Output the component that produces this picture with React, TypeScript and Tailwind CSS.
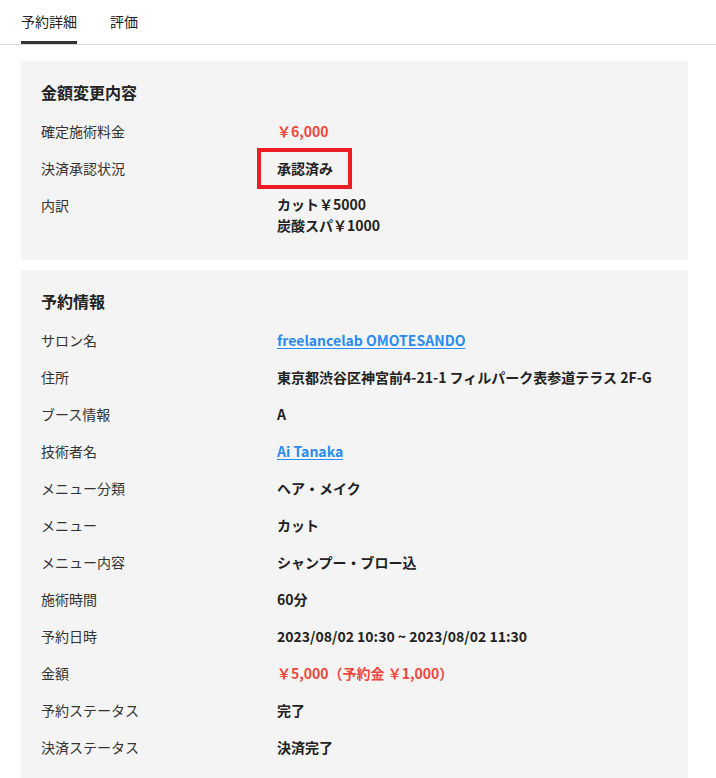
const font = { fontFamily: '"Noto Sans CJK JP", "Noto Sans", sans-serif' }

type Row = { label: string; value: React.ReactNode }

function InfoRow({ label, value }: Row) {
  return (
    <div className="flex items-start py-[7.5px] leading-[22px]">
      <div className="w-[236px] shrink-0 text-[14px] text-[#333]">{label}</div>
      <div className="text-[14px] font-bold text-[#222]">{value}</div>
    </div>
  )
}

function Panel({ title, rows }: { title: string; rows: Row[] }) {
  return (
    <section className="mx-[21px] w-[667px] bg-[#f4f4f4] px-5 pb-[17px] pt-[19px]">
      <h2 className="mb-[8px] text-[16px] font-bold leading-[24px] text-[#222]">{title}</h2>
      {rows.map((r) => (
        <InfoRow key={r.label} label={r.label} value={r.value} />
      ))}
    </section>
  )
}

function Link({ children }: { children: React.ReactNode }) {
  return <span className="text-[#2a8cf0] underline underline-offset-2">{children}</span>
}

export default function App() {
  const priceRows: Row[] = [
    { label: "確定施術料金", value: <span className="text-[#f0473c]">￥6,000</span> },
    {
      label: "決済承認状況",
      value: (
        <span className="relative">
          承認済み
          <span className="absolute -bottom-[11px] -left-[20px] -right-[19px] -top-[10px] border-4 border-[#ec1c24]" />
        </span>
      ),
    },
    {
      label: "内訳",
      value: (
        <div className="leading-[21px]">
          <div>カット￥5000</div>
          <div>炭酸スパ￥1000</div>
        </div>
      ),
    },
  ]

  const bookingRows: Row[] = [
    { label: "サロン名", value: <Link>freelancelab OMOTESANDO</Link> },
    { label: "住所", value: "東京都渋谷区神宮前4-21-1 フィルパーク表参道テラス 2F-G" },
    { label: "ブース情報", value: "A" },
    { label: "技術者名", value: <Link>Ai Tanaka</Link> },
    { label: "メニュー分類", value: "ヘア・メイク" },
    { label: "メニュー", value: "カット" },
    { label: "メニュー内容", value: "シャンプー・ブロー込" },
    { label: "施術時間", value: "60分" },
    { label: "予約日時", value: "2023/08/02 10:30 ~ 2023/08/02 11:30" },
    { label: "金額", value: <span className="text-[#f0473c]">￥5,000（予約金 ￥1,000）</span> },
    { label: "予約ステータス", value: "完了" },
    { label: "決済ステータス", value: "決済完了" },
  ]

  return (
    <div style={font} className="h-[778px] w-[716px] overflow-hidden bg-white">
      <nav className="flex border-b border-[#d9d9d9] px-[21px]">
        <div className="mr-[33px] border-b-[3px] border-[#333] pb-[9px] pt-[11px] text-[14px] leading-[21px] text-[#222]">
          予約詳細
        </div>
        <div className="pb-[12px] pt-[11px] text-[14px] leading-[21px] text-[#222]">評価</div>
      </nav>
      <div className="flex flex-col gap-[10px] pt-[16px]">
        <Panel title="金額変更内容" rows={priceRows} />
        <Panel title="予約情報" rows={bookingRows} />
      </div>
    </div>
  )
}
